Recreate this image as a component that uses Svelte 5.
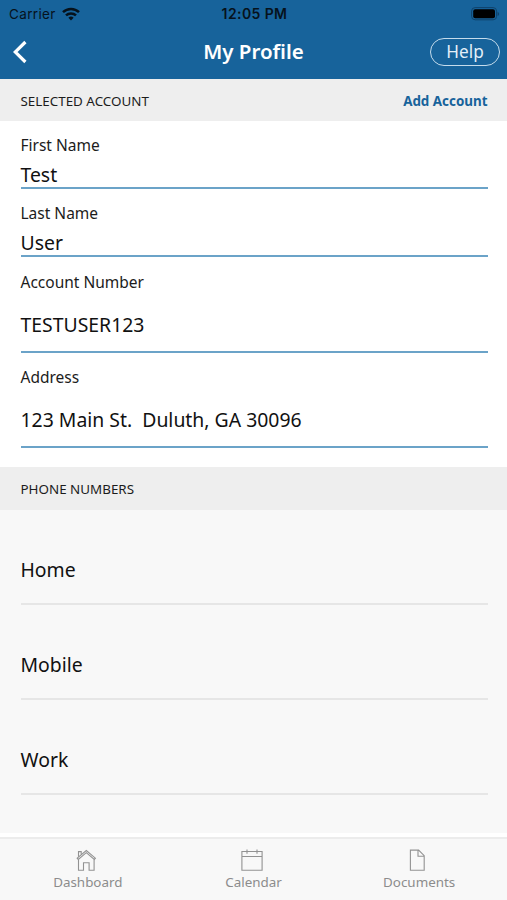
<script lang="ts">
  interface Field {
    label: string;
    value: string;
    tall?: boolean;
  }

  const fields: Field[] = [
    { label: 'First Name', value: 'Test' },
    { label: 'Last Name', value: 'User' },
    { label: 'Account Number', value: 'TESTUSER123', tall: true },
    { label: 'Address', value: '123 Main St.  Duluth, GA 30096', tall: true }
  ];

  const phones = ['Home', 'Mobile', 'Work'];
  const tabs = ['Dashboard', 'Calendar', 'Documents'];
</script>

<div class="screen">
  <header>
    <div class="status">
      <span class="carrier">
        Carrier
        <svg width="18" height="14" viewBox="0 0 18 14" fill="none" stroke="#06121c" stroke-width="2.5">
          <path d="M1 5.2a11.6 11.6 0 0 1 16 0" />
          <path d="M4 8.4a7.2 7.2 0 0 1 10 0" />
          <path d="M6.4 10.7a3.8 3.8 0 0 1 5.2 0L9 13.6z" fill="#06121c" stroke="none" />
        </svg>
      </span>
      <span class="time">12:05 PM</span>
      <svg class="battery" width="30" height="14" viewBox="0 0 30 14">
        <rect x="1.6" y="0.6" width="25" height="12.2" rx="3.5" fill="none" stroke="#0f426a" />
        <rect x="3.2" y="2.2" width="21.8" height="9" rx="2" fill="#000" />
        <path d="M27.6 4.8v4.2q1.5-.7 1.5-2.1t-1.5-2.1z" fill="#0f426a" />
      </svg>
    </div>
    <nav class="bar">
      <button class="back" type="button" aria-label="Back">
        <svg width="14" height="24" viewBox="0 0 14 24" fill="none" stroke="#fff" stroke-width="3.2">
          <path d="M12.4 2 2.2 12l10.2 10" />
        </svg>
      </button>
      <h1>My Profile</h1>
      <button class="help" type="button">Help</button>
    </nav>
  </header>

  <div class="section">
    <h2>SELECTED ACCOUNT</h2>
    <button class="add" type="button">Add Account</button>
  </div>

  <div class="fields">
    {#each fields as field}
      <div class="field" class:tall={field.tall}>
        <div class="label">{field.label}</div>
        <div class="value">{field.value}</div>
      </div>
    {/each}
  </div>

  <div class="section phone-head">
    <h2>PHONE NUMBERS</h2>
  </div>

  <div class="phones">
    {#each phones as phone}
      <div class="phone">{phone}</div>
    {/each}
  </div>

  <footer>
    {#each tabs as tab}
      <button class="tab" type="button">
        <svg width="24" height="22" viewBox="0 0 24 22" fill="none" stroke="#929292" stroke-width="1.1">
          {#if tab === 'Dashboard'}
            <path d="M1.2 9.2 10.3 1.5l9.1 7.7-1.1 1.3-8-6.8-8 6.8z" />
            <path d="M2.5 10.4v10.8h5v-7.4h5.6v7.4h5V10.4M2.5 7.8V2.6h2.7v2.8" />
          {:else if tab === 'Calendar'}
            <path d="M.9 2.5h20.2v18.7H.9zM.9 7.5h20.2M6 .6v4.2M16 .6v4.2" />
          {:else}
            <path d="M3.4 1.1h8.2l5.6 5.6v14.5H3.4zM11 1.1v6.2h6.2" />
          {/if}
        </svg>
        <span>{tab}</span>
      </button>
    {/each}
  </footer>
</div>

<style>
  :global(body) {
    margin: 0;
    background: #fff;
  }
  .screen {
    display: flex;
    flex-direction: column;
    width: 507px;
    height: 900px;
    overflow: hidden;
    background: #fff;
    color: #1c1c1c;
    font-family: 'Noto Sans', sans-serif;
  }
  button {
    margin: 0;
    padding: 0;
    border: none;
    background: none;
    color: inherit;
    font-family: inherit;
  }
  h1,
  h2 {
    margin: 0;
    font-weight: 400;
  }
  header {
    box-sizing: border-box;
    flex: none;
    height: 79px;
    background: #17639b;
  }
  .status {
    display: grid;
    grid-template-columns: 1fr auto 1fr;
    align-items: center;
    height: 27px;
    padding: 0 7px 0 9px;
    color: #06121c;
    font-family: Inter, sans-serif;
    font-size: 13.5px;
  }
  .carrier {
    display: flex;
    align-items: center;
    gap: 6px;
    letter-spacing: 0.35px;
  }
  .time {
    font-weight: 600;
    font-size: 14px;
    letter-spacing: 0.4px;
  }
  .battery {
    justify-self: end;
  }
  .bar {
    display: grid;
    grid-template-columns: 1fr auto 1fr;
    align-items: center;
    height: 50px;
    padding: 0 7px;
    color: #fff;
  }
  .back {
    display: flex;
    margin-left: 6px;
  }
  h1 {
    padding-bottom: 2px;
    font-size: 20.5px;
    font-weight: 600;
    line-height: 28px;
  }
  .help {
    justify-self: end;
    box-sizing: border-box;
    width: 70px;
    height: 28px;
    border: 1.5px solid #c5dcec;
    border-radius: 14px;
    color: #e3eff8;
    font-size: 17.2px;
    line-height: 24px;
  }
  .section {
    display: flex;
    flex: none;
    align-items: center;
    justify-content: space-between;
    box-sizing: border-box;
    height: 42px;
    padding: 2px 19.5px 0 20.5px;
    background: #eee;
  }
  h2 {
    font-size: 13.4px;
    line-height: 20px;
  }
  .add {
    color: #17639b;
    font-size: 13.4px;
    font-weight: 700;
  }
  .fields {
    flex: none;
    height: 332px;
    padding: 14px 19.5px 0 20.5px;
  }
  .phone-head {
    height: 43px;
    padding-top: 1px;
  }
  .field {
    height: 52.2px;
    margin-bottom: 14.1px;
    border-bottom: 2px solid #6ba3c8;
  }
  .label {
    font-size: 15.5px;
    line-height: 20px;
  }
  .value {
    padding-top: 6px;
    color: #111;
    font-size: 19.4px;
    line-height: 28px;
    white-space: pre;
  }
  .tall {
    height: 79.3px;
  }
  .tall .value {
    padding-top: 19.5px;
  }
  .phones {
    flex: none;
    height: 323px;
    padding: 0 19.5px 0 20.5px;
    background: #f8f8f8;
  }
  .phone {
    box-sizing: border-box;
    height: 95.1px;
    padding-top: 46px;
    border-bottom: 2px solid #e6e6e6;
    color: #111;
    font-size: 19.4px;
    line-height: 28px;
  }
  footer {
    display: grid;
    flex: 1;
    grid-template-columns: repeat(3, 1fr);
    margin-top: 4px;
    padding: 0 5px;
    border-top: 2px solid #ececec;
    background: #f8f8f8;
  }
  .tab {
    display: flex;
    flex-direction: column;
    align-items: center;
    padding-top: 10px;
    color: #8c8c8c;
    font-size: 13.4px;
    line-height: 23px;
  }
</style>
